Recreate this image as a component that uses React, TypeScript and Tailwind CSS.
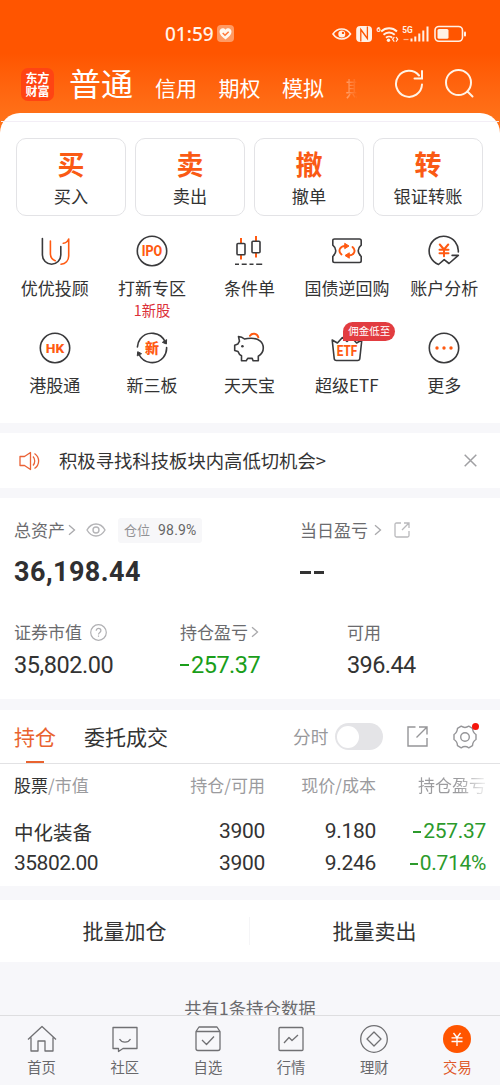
import type { ReactNode } from "react";

const DARK = "#3a3a3c";
const ORANGE = "#ff5a12";

function Icon({ children }: { children: ReactNode }) {
  return (
    <svg width="32" height="32" viewBox="0 0 32 32" fill="none" stroke={DARK} strokeWidth="1.6" strokeLinecap="round" strokeLinejoin="round">
      {children}
    </svg>
  );
}

function Glyph({ y, size, width, children }: { y: number; size: number; width: number; children: string }) {
  return (
    <text x={16 - width / 2} y={y} fontSize={size} textLength={width} lengthAdjust="spacingAndGlyphs" fill={ORANGE} stroke="none" fontWeight="800" className="font-['Roboto','Noto_Sans_CJK_SC',sans-serif]">
      {children}
    </text>
  );
}

const actions = [
  ["买", "买入"],
  ["卖", "卖出"],
  ["撤", "撤单"],
  ["转", "银证转账"],
];

const tools: { label: string; note?: string; badge?: string; icon: ReactNode }[] = [
  {
    label: "优优投顾",
    icon: (
      <Icon>
        <path d="M3.4 3.5V20a9.2 9.2 0 0 0 18.4 0V11.5" />
        <path stroke={ORANGE} d="M11.4 6v12.5c0 3.5 1.7 6 4.8 7.2M24.3 8.3c2.8-.3 4.3-1.6 5.4-4.3V21c0 4.500-3.200 7.700-7.700 8.200" />
      </Icon>
    ),
  },
  {
    label: "打新专区",
    note: "1新股",
    icon: (
      <Icon>
        <circle cx="16" cy="16" r="14.700" />
        <Glyph y={21} size={14} width={20.500}>IPO</Glyph>
      </Icon>
    ),
  },
  {
    label: "条件单",
    icon: (
      <Icon>
        <g strokeLinecap="butt">
          <path stroke={ORANGE} strokeWidth="2" d="M8 3v5.500M8 20v4.500M23 1v5M23 18v4.500" />
          <rect x="4" y="8.500" width="8" height="11.300" rx="1" />
          <rect x="19" y="6.300" width="8" height="11.500" rx="1" />
          <path d="M2 29.200h4M8.700 29.200h5M16.500 29.200h4M23.200 29.200h6" />
        </g>
      </Icon>
    ),
  },
  {
    label: "国债逆回购",
    icon: (
      <Icon>
        <path d="M3.500 4h25q1.700 0 1.700 1.700v4.500c-2.200 1.800-3 3.700-3 5.600s.8 3.800 3 5.600v4.400q0 1.700-1.700 1.700h-25q-1.700 0-1.700-1.700v-4.400c2.200-1.800 3-3.700 3-5.600s-.8-3.800-3-5.600V5.700Q1.800 4 3.500 4Z" />
        <g stroke={ORANGE} strokeWidth="1.900">
          <path d="M10.500 19.500c-4-3.200-1.600-8.700 4-8.500M21.500 12c4 3.200 1.600 8.700-4 8.500" />
          <path fill={ORANGE} strokeWidth="1" d="m14 8.500 4 2.500-4 2.500ZM18 18l-4 2.500 4 2.500Z" />
        </g>
      </Icon>
    ),
  },
  {
    label: "账户分析",
    icon: (
      <Icon>
        <path d="M30.300 17A14.600 14.600 0 1 0 10.500 29.500l5.700-4.800 4.800 3.800 9.300-8.100h-6.200" />
        <path stroke={ORANGE} strokeWidth="2" d="m11.800 9.500 4.200 5 4.200-5M16 14.500v6.800M11.500 14.800h9M11.500 18.300h9" />
      </Icon>
    ),
  },
  {
    label: "港股通",
    icon: (
      <Icon>
        <circle cx="16" cy="16" r="14.700" />
        <Glyph y={20.800} size={13.500} width={18.500}>HK</Glyph>
      </Icon>
    ),
  },
  {
    label: "新三板",
    icon: (
      <Icon>
        <path d="M4.200 7A14.700 14.700 0 0 1 29.300 10M30.600 15.500A14.700 14.700 0 0 1 27.300 25.500M27.300 25.500A14.700 14.700 0 0 1 3 22.500M1.400 15A14.700 14.700 0 0 1 4.200 7" />
        <path fill={DARK} strokeWidth="1" d="m30.600 8-.2 4-3.700-1.500ZM1.300 23.500l.4-3.800 3.500 1.800Z" />
        <Glyph y={21.300} size={14} width={14}>新</Glyph>
      </Icon>
    ),
  },
  {
    label: "天天宝",
    icon: (
      <Icon>
        <path d="M5.500 4.500c2.200.1 4.300 1 6 2.500 2-.6 4-.8 6.600-.8 7.400 0 12.200 3.800 12.200 9.800 0 3.500-1.900 6.400-5 8.300v4.400h-5.200l-.9-2.300h-4.500l-1.500 2.300H8.500v-4.900C6.600 22.800 5.500 21 5 19.500l-3.300-1v-5.200l3.200-1.200c.4-1.100.9-2 1.600-2.800Z" />
        <circle cx="9.400" cy="14.300" r="1.300" fill={DARK} stroke="none" />
        <path stroke={ORANGE} strokeWidth="2" d="M17 3.800c2-3 7-2.700 8.300 1.500" />
      </Icon>
    ),
  },
  {
    label: "超级ETF",
    badge: "佣金低至",
    icon: (
      <Icon>
        <path d="m1.200 8 2 18.500q.2 2 2.200 2h21.200q2 0 2.200-2l2-18.500-5.200 3-5-5.500-4.600 4-4.600-4-5 5.500Z" />
        <Glyph y={24} size={15} width={20.500}>ETF</Glyph>
      </Icon>
    ),
  },
  {
    label: "更多",
    icon: (
      <Icon>
        <circle cx="16" cy="16" r="14.700" />
        <g fill={ORANGE} stroke="none">
          <circle cx="9" cy="16" r="1.700" />
          <circle cx="16" cy="16" r="1.700" />
          <circle cx="23" cy="16" r="1.700" />
        </g>
      </Icon>
    ),
  },
];

function Chevron() {
  return (
    <svg width="8" height="14" viewBox="0 0 8 14" fill="none" stroke="#a9a9ac" strokeWidth="1.300">
      <path d="m1 2.200 5.500 4.800L1 11.800" />
    </svg>
  );
}

function StatusIcons() {
  return (
    <svg width="136" height="22" viewBox="0 0 136 22" fill="none" stroke="#fff1e6" strokeWidth="1.600">
      <path d="M1 11c4.500-6.600 13-6.600 17.500 0-4.500 6.600-13 6.600-17.500 0Z" />
      <circle cx="9.800" cy="11" r="3.500" fill="#fff1e6" stroke="none" />
      <circle cx="11" cy="9.900" r="1.200" fill="#ff5500" stroke="none" />
      <rect x="24.200" y="3" width="15.800" height="16" rx="4" fill="#fff1e6" stroke="none" />
      <path stroke="#ff5500" strokeWidth="1.300" d="M28.800 18.500V6.500l6.600 9V3.500M28.800 6.500l6.600 9" />
      <g strokeWidth="1.900">
        <path d="M49.200 8.500c4.500-4.300 11.300-4.300 15.800 0M51.500 11.700c3.200-3 8-3 11.200 0" />
        <path d="M54 14.700c1.700-1.500 4.500-1.500 6.200 0" />
      </g>
      <circle cx="56.500" cy="17.300" r="1.700" fill="#fff1e6" stroke="none" />
      <path strokeWidth="1.200" d="m62.300 14-1.700 2.300 1.700 2.300M64 14l1.700 2.300L64 18.600" />
      <g fill="#fff1e6" stroke="none" fontWeight="700" className="font-['Roboto',sans-serif]">
        <text x="44.600" y="8.500" fontSize="7.500">6</text>
        <text x="70.300" y="10" fontSize="9" textLength="10.500" lengthAdjust="spacingAndGlyphs">5G</text>
      </g>
      <path opacity=".6" strokeWidth="1.200" d="M71.500 16.500h5" />
      <path strokeWidth="2" d="M79.500 18.500v-3M83.300 18.500v-5M87.300 18.500V10.500M91.300 18.500V7.500M95.500 18.500V3.500" />
      <rect x="103" y="3.500" width="27.500" height="14.800" rx="4" />
      <rect x="105.500" y="6" width="11" height="9.800" rx="1.500" fill="#fff1e6" stroke="none" />
      <path strokeWidth="2" strokeLinecap="round" d="M133 9.500v3" />
    </svg>
  );
}

function Header() {
  return (
    <header className="h-[133px] shrink-0 bg-linear-to-b from-[#ff5500] from-40% to-[#ff7219] to-90% text-white">
      <div className="flex h-[68px] items-center pl-[165px] pr-[32px]">
        <span className="w-[52px] whitespace-nowrap font-['Noto_Sans',sans-serif] text-[19px] font-medium leading-none text-[#fff3ea]">01:59</span>
        <svg className="mb-px" width="17" height="17" viewBox="0 0 17 17">
          <rect width="17" height="17" rx="4" fill="#ff9a63" />
          <path fill="#fff8f0" d="M8.500 14.500C5 12 2.500 9.700 2.500 6.800c0-3.500 4-4.600 6-2 2-2.600 6-1.500 6 2 0 2.900-2.500 5.200-6 7.700Z" />
          <path d="m5.700 8 2.300 2.300 3.700-3.600" fill="none" stroke="#ff7a3a" strokeWidth="1.500" />
        </svg>
        <div className="ml-auto"><StatusIcons /></div>
      </div>
      <div className="flex h-[32px] items-center pl-[21px] pr-[26px]">
        <div className="flex h-[33px] w-[33px] shrink-0 flex-col items-center justify-center rounded-[7px] bg-[#ff4413] pb-px text-[12px] font-bold leading-[13px]">
          <span>东方</span>
          <span>财富</span>
        </div>
        <nav className="mb-[5px] flex w-[318px] items-baseline whitespace-nowrap pl-[15px] text-[21px] leading-[32px]">
          <span className="w-[86px] shrink-0 text-[32px] leading-[44px]">普通</span>
          <span className="w-[63.500px] shrink-0">信用</span>
          <span className="w-[63.500px] shrink-0">期权</span>
          <span className="w-[63.500px] shrink-0">模拟</span>
          <span className="w-[21px] shrink-0 bg-linear-to-r from-white/40 to-transparent to-55% bg-clip-text text-transparent">期</span>
        </nav>
        <svg className="ml-auto shrink-0" width="80" height="30" viewBox="0 0 80 30" fill="none" stroke="#fff3e6" strokeWidth="2" strokeLinecap="round">
          <path d="M28 15.500A13 13 0 1 1 25 6.500M28 2v7.500H20.500" />
          <circle cx="64.500" cy="13.500" r="12.500" />
          <path d="m73.500 22.500 5 5" />
        </svg>
      </div>
    </header>
  );
}

function Shortcuts() {
  return (
    <section className="-mt-5 h-[310px] shrink-0 rounded-t-[20px] bg-white">
      <div className="mx-px mb-4 h-[9px] border-b border-[#f3eef6]" />
      <div className="grid grid-cols-4 gap-[9px] pl-[16px] pr-[17px]">
        {actions.map(([glyph, label]) => (
          <button key={label} className="flex h-[78px] flex-col items-center rounded-[10px] border border-[#e3e3e6] pt-[9px]">
            <span className="text-[27px] font-bold leading-[31px] text-[#fa5a14]">{glyph}</span>
            <span className="mt-[4px] whitespace-nowrap text-[17.200px] leading-[26px] text-[#333]">{label}</span>
          </button>
        ))}
      </div>
      <div className="mt-[19px] grid grid-cols-5 pl-[6px] pr-[7px]">
        {tools.map((t) => (
          <div key={t.label} className="relative flex h-[97px] flex-col items-center">
            {t.icon}
            <span className="mt-[9px] whitespace-nowrap text-[17px] leading-[24px] text-[#333]">{t.label}</span>
            {t.note && <span className="text-[14.300px] leading-[19px] text-[#dc3038]">{t.note}</span>}
            {t.badge && (
              <span className="absolute -top-[10px] left-[45px] h-[19px] w-[52px] whitespace-nowrap rounded-[10px] rounded-bl-none bg-[#e23c40] text-center text-[10.500px] leading-[18px] text-white">{t.badge}</span>
            )}
          </div>
        ))}
      </div>
    </section>
  );
}

function Notice() {
  return (
    <section className="mt-[10px] flex h-[55px] shrink-0 items-center bg-white pl-[19px] pr-[23px]">
      <svg width="22" height="20" viewBox="0 0 22 20" fill="none" stroke="#ea6236" strokeWidth="1.300" strokeLinejoin="round">
        <path d="M1 5.500h4.500l6-4v17l-6-4H1ZM14 5.500c2.300 2.500 2.300 6.500 0 9M15.500 2.500c5.500 3.800 5.500 11.200 0 15" />
      </svg>
      <span className="mb-px ml-[18px] whitespace-nowrap text-[18.350px] leading-[26px] text-[#333]">积极寻找科技板块内高低切机会&gt;</span>
      <svg className="ml-auto" width="13" height="13" viewBox="0 0 13 13" stroke="#a0a0a3" strokeWidth="1.500"><path d="m.7.7 11.600 11.600M12.300.7.7 12.300" /></svg>
    </section>
  );
}

function RoundExport() {
  return (
    <svg width="16" height="16" viewBox="0 0 16 16" fill="none" stroke="#b9b9bc" strokeWidth="1.300">
      <path d="M7 1H2.500Q1 1 1 2.500v11Q1 15 2.500 15h11q1.500 0 1.500-1.500V9M10 1h5v5M14.700 1.300 8 8" />
    </svg>
  );
}

function SquareExport() {
  return (
    <svg width="21" height="21" viewBox="0 0 21 21" fill="none" stroke="#959598" strokeWidth="1.400">
      <path d="M8.500 1H1v19h19v-8M12 1h8v7.500M20 1 9.500 11.500" />
    </svg>
  );
}

function Assets() {
  return (
    <section className="mt-[10px] h-[201px] shrink-0 whitespace-nowrap bg-white px-[14px] text-[17px] text-[#6b6b6e]">
      <div className="flex pt-[19px]">
        <div className="flex h-[26px] w-[286px] items-center">
          <span className="w-[54px]">总资产</span>
          <Chevron />
          <svg className="ml-[10px]" width="20" height="14" viewBox="0 0 20 14" fill="none" stroke="#b5b5b8" strokeWidth="1.400">
            <path d="M1 7c4.500-8 13.500-8 18 0-4.500 8-13.500 8-18 0Z" /><circle cx="10" cy="7" r="3" />
          </svg>
          <span className="ml-[12px] flex h-[25px] w-[84px] items-center rounded-[3px] bg-[#f7f7f9] pl-[6px] text-[13px] text-[#929295]">
            仓位<span className="ml-[8px] font-['Roboto',sans-serif] text-[14px] tracking-[0.200px] text-[#666]">98.9%</span>
          </span>
        </div>
        <div className="flex h-[26px] items-center">
          <span className="w-[74px]">当日盈亏</span>
          <Chevron />
          <span className="ml-[12px]"><RoundExport /></span>
        </div>
      </div>
      <div className="flex h-[54px] items-center pt-[4px] font-['Roboto',sans-serif] text-[27px] font-bold text-[#2f2f31]">
        <span className="w-[286px] tracking-[0.450px]">36,198.44</span>
        <span className="flex gap-[3px]"><i className="h-[3px] w-[10.500px] bg-[#333]" /><i className="h-[3px] w-[10.500px] bg-[#333]" /></span>
      </div>
      <div className="mt-[22px] flex">
        <div className="w-[166px]">
          <div className="flex h-[26px] items-center">证券市值
            <svg className="ml-[8px]" width="17" height="17" viewBox="0 0 17 17" fill="none" stroke="#b0b0b3" strokeWidth="1.200">
              <circle cx="8.500" cy="8.500" r="7.800" /><path d="M6.200 6.700c0-3 4.700-3 4.700 0 0 1.800-2.400 1.700-2.400 3.700M8.500 11.500v1.300" />
            </svg>
          </div>
          <div className="mt-[5px] font-['Roboto',sans-serif] text-[23.500px] leading-[30px] tracking-[-0.450px] text-[#333]">35,802.00</div>
        </div>
        <div className="w-[167px]">
          <div className="flex h-[26px] items-center"><span className="w-[71px]">持仓盈亏</span><Chevron /></div>
          <div className="mt-[5px] flex items-center font-['Roboto',sans-serif] text-[23.500px] leading-[30px] tracking-[-0.500px] text-[#1a9e1a]"><i className="mr-[2px] h-[2px] w-[9px] bg-[#1a9e1a]" />257.37</div>
        </div>
        <div>
          <div className="flex h-[26px] items-center">可用</div>
          <div className="mt-[5px] font-['Roboto',sans-serif] text-[23.500px] leading-[30px] tracking-[-0.600px] text-[#333]">396.44</div>
        </div>
      </div>
    </section>
  );
}

function Loss({ children }: { children: string }) {
  return (
    <span className="flex w-[110px] items-center justify-end text-[#2c9a2c]"><i className="mr-[2px] h-[2px] w-[8px] bg-[#2c9a2c]" />{children}</span>
  );
}

function Positions() {
  return (
    <section className="mt-[11px] h-[176px] shrink-0 whitespace-nowrap bg-white">
      <div className="flex h-[54px] items-center border-b border-[#e2e2e4] pl-[14px] text-[21px]">
        <div className="flex h-full w-[70px] shrink-0 flex-col text-[#e9632f]">
          <span className="h-[50.500px] leading-[52px]">持仓</span>
          <i className="ml-[12px] h-[2.500px] w-[18px] bg-[#e9632f]" />
        </div>
        <span className="w-[209px] shrink-0 text-[#333]">委托成交</span>
        <span className="w-[36px] shrink-0 text-[17.700px] text-[#98989b]">分时</span>
        <span className="ml-[6px] flex h-[27px] w-[48px] items-center rounded-full bg-[#e4e4e7] px-[2px]"><i className="h-[22px] w-[22px] rounded-full bg-white" /></span>
        <span className="ml-[24px]"><SquareExport /></span>
        <span className="relative ml-[25px]">
          <svg width="24" height="24" viewBox="0 0 24 24" fill="none" stroke="#959598" strokeWidth="1.400" strokeLinejoin="round">
            <path d="M8.200 1.200q3.800 2.500 7.600 0l3.700 2.100q.2 4.300 3.500 6.200v5q-3.300 1.900-3.500 6.200l-3.700 2.100q-3.800-2.500-7.600 0l-3.700-2.100q-.2-4.300-3.500-6.200v-5q3.300-1.900 3.500-6.200Z" />
            <circle cx="12" cy="12" r="4.300" />
          </svg>
          <i className="absolute -right-[2px] -top-[2px] h-[7px] w-[7px] rounded-full bg-[#f5160c]" />
        </span>
      </div>
      <div className="flex h-[45px] items-center pb-[3px] pl-[14px] text-[17px] text-[#9b9b9e]">
        <span className="w-[126px]"><span className="text-[#333]">股票</span>/市值</span>
        <span className="w-[125px] text-right">持仓/可用</span>
        <span className="w-[111px] text-right">现价/成本</span>
        <span className="w-[110px] bg-linear-to-r from-[#9b9b9e] from-75% to-[#f2f2f2] bg-clip-text text-right text-transparent">持仓盈亏</span>
      </div>
      <div className="flex h-[32px] items-center pl-[14px] pt-[13px] font-['Roboto',sans-serif] text-[21px] tracking-[-0.300px] text-[#333]">
        <span className="w-[126px] font-['Noto_Sans_CJK_SC',sans-serif] text-[19.500px] leading-none tracking-normal">中化装备</span>
        <span className="w-[125px] text-right">3900</span>
        <span className="w-[111px] text-right">9.180</span>
        <Loss>257.37</Loss>
      </div>
      <div className="flex h-[44px] items-center pl-[14px] pt-[2px] font-['Roboto',sans-serif] text-[21px] tracking-[-0.300px] text-[#333]">
        <span className="w-[126px] tracking-[-0.500px]">35802.00</span>
        <span className="w-[125px] text-right">3900</span>
        <span className="w-[111px] text-right">9.246</span>
        <Loss>0.714%</Loss>
      </div>
    </section>
  );
}

const navItems: { label: string; icon: ReactNode }[] = [
  { label: "首页", icon: <path d="m1 15.500 14-13 14 13M4 13.500V27h7V17h7v10h8V13.500" /> },
  { label: "社区", icon: <path d="M3 3.500h24v21H13l-4.500 3v-3H3ZM9.500 15c2.500 4.300 8.500 4.300 11 0" /> },
  { label: "自选", icon: <path d="M3 7.500v17q0 2 2 2h20q2 0 2-2v-17L24 3H6ZM3 7.500h24M9 16l4.500 4.500L21 12.500" /> },
  { label: "行情", icon: <path d="M5 3.500h21q1 0 1 1v21q0 1-1 1H4q-1 0-1-1v-21q0-1 1-1ZM8 19l5-5.500 3 3 6-5.500" /> },
  { label: "理财", icon: <><circle cx="15" cy="15" r="13.300" /><path d="m15 8 7 7-7 7-7-7Z" /></> },
  { label: "交易", icon: <><circle cx="15" cy="15" r="14" fill="#ff5500" stroke="none" /><path stroke="#fff" strokeWidth="1.300" d="m11.500 9 3.500 4.500L18.500 9M15 13.500V22M9.500 13.800h11M9.500 17.500h11" /></> },
];

function BottomNav() {
  return (
    <nav className="grid h-[70px] shrink-0 grid-cols-6 border-t border-[#dedee0] bg-[#f7f7fa] pr-px pt-[8px]">
      {navItems.map((n, i) => (
        <div key={n.label} className={i === 5 ? "flex flex-col items-center text-[#e05a2b]" : "flex flex-col items-center text-[#68686b]"}>
          <svg width="30" height="30" viewBox="0 0 30 30" fill="none" stroke="#707073" strokeWidth="1.300" strokeLinejoin="round">{n.icon}</svg>
          <span className="mt-[4px] text-[14.300px] leading-[18px]">{n.label}</span>
        </div>
      ))}
    </nav>
  );
}

export default function App() {
  return (
    <div className="flex h-[1085px] w-[500px] flex-col overflow-hidden bg-[#f7f7fa] font-['Noto_Sans_CJK_SC',sans-serif]">
      <Header />
      <Shortcuts />
      <Notice />
      <Assets />
      <Positions />
      <div className="mt-[14px] flex h-[62px] shrink-0 items-center bg-white pr-px text-center text-[21px] text-[#333]">
        <span className="flex-1">批量加仓</span>
        <i className="h-[28px] w-px bg-[#f5f5f7]" />
        <span className="flex-1">批量卖出</span>
      </div>
      <div className="h-[53px] shrink-0 overflow-hidden pt-[34px] text-center text-[17.400px] leading-[24px] text-[#6b6b6e]">共有1条持仓数据</div>
      <BottomNav />
    </div>
  );
}
